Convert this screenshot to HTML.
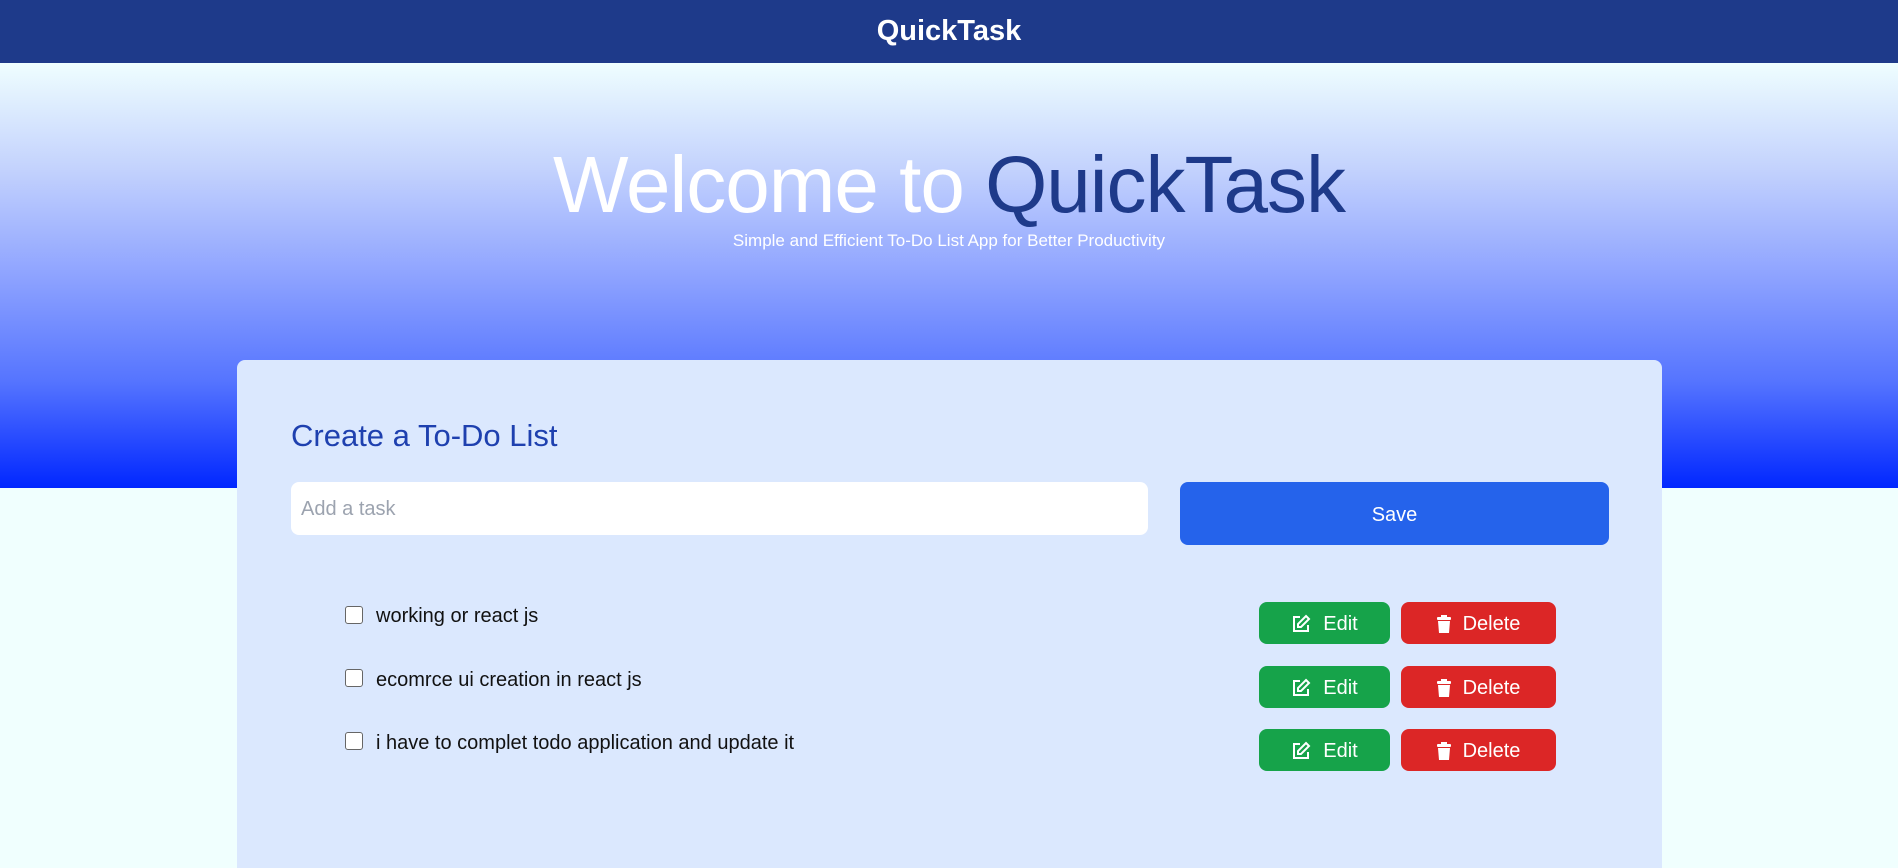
<!DOCTYPE html>
<html><head><style>
*{box-sizing:border-box;margin:0;padding:0}
html,body{width:1898px;height:868px;overflow:hidden}
body{background:#f0fffe;font-family:"Liberation Sans",sans-serif;position:relative}
.nav{position:absolute;left:0;top:0;width:1898px;height:63px;background:#1e3a8a;color:#fff;font-weight:bold;font-size:29px;text-align:center;line-height:63px}
.hero{position:absolute;left:0;top:63px;width:1898px;height:425px;background:linear-gradient(#effeff 0%,#c3d2fd 25%,#8ea3ff 50%,#5574ff 75%,#0127ff 100%)}
.title{position:absolute;left:0;width:1898px;top:139px;text-align:center;font-size:80px;color:#fff;letter-spacing:-1px}
.title span{color:#1e3a8a}
.sub{position:absolute;left:0;width:1898px;top:231px;text-align:center;font-size:17px;color:#fff}
.card{position:absolute;left:237px;top:360px;width:1425px;height:508px;background:#dbe8fe;border-radius:8px 8px 0 0}
h2{position:absolute;left:291px;top:418px;font-size:31px;font-weight:normal;color:#1e40af}
.input{position:absolute;left:291px;top:482px;width:857px;height:53px;background:#fff;border-radius:8px;font-size:20px;color:#9ca3af;padding:16px 10px}
.save{position:absolute;left:1180px;top:482px;width:429px;height:63px;background:#2563eb;border-radius:8px;color:#fff;font-size:20px;text-align:center;line-height:66px}
.cb{position:absolute;left:345px;width:18px;height:18px;border:1.5px solid #666;border-radius:3px;background:#fff}
.t{position:absolute;left:376px;font-size:20px;color:#111}
.btn{position:absolute;height:42px;border-radius:8px;color:#fff;font-size:20px;line-height:42px;display:flex;align-items:center;justify-content:center;gap:12px;padding-top:2px}
.e{left:1259px;width:131px;background:#16a34a}
.d{left:1401px;width:155px;background:#dc2626}
</style></head><body>
<div class="nav">QuickTask</div>
<div class="hero"></div>
<div class="title">Welcome to <span>QuickTask</span></div>
<div class="sub">Simple and Efficient To-Do List App for Better Productivity</div>
<div class="card"></div>
<h2>Create a To-Do List</h2>
<div class="input">Add a task</div>
<div class="save">Save</div>

<div class="cb" style="top:606px"></div><div class="t" style="top:605px">working or react js</div>
<div class="cb" style="top:669px"></div><div class="t" style="top:669px">ecomrce ui creation in react js</div>
<div class="cb" style="top:732px"></div><div class="t" style="top:732px">i have to complet todo application and update it</div>

<div class="btn e" style="top:602px"><svg width="20" height="20" viewBox="0 0 20 20" fill="none" stroke="#fff" stroke-width="2"><path d="M9 3H3v14h14v-6"/><path d="M15 2l3 3-8 8H7v-3z"/></svg>Edit</div>
<div class="btn d" style="top:602px"><svg width="14" height="18" viewBox="0 0 14 18" fill="#fff"><rect x="0" y="2" width="14" height="3" rx="1"/><rect x="4" y="0" width="6" height="3"/><path d="M1 6h12l-1 12H2z"/></svg>Delete</div>
<div class="btn e" style="top:666px"><svg width="20" height="20" viewBox="0 0 20 20" fill="none" stroke="#fff" stroke-width="2"><path d="M9 3H3v14h14v-6"/><path d="M15 2l3 3-8 8H7v-3z"/></svg>Edit</div>
<div class="btn d" style="top:666px"><svg width="14" height="18" viewBox="0 0 14 18" fill="#fff"><rect x="0" y="2" width="14" height="3" rx="1"/><rect x="4" y="0" width="6" height="3"/><path d="M1 6h12l-1 12H2z"/></svg>Delete</div>
<div class="btn e" style="top:729px"><svg width="20" height="20" viewBox="0 0 20 20" fill="none" stroke="#fff" stroke-width="2"><path d="M9 3H3v14h14v-6"/><path d="M15 2l3 3-8 8H7v-3z"/></svg>Edit</div>
<div class="btn d" style="top:729px"><svg width="14" height="18" viewBox="0 0 14 18" fill="#fff"><rect x="0" y="2" width="14" height="3" rx="1"/><rect x="4" y="0" width="6" height="3"/><path d="M1 6h12l-1 12H2z"/></svg>Delete</div>
</body></html>
